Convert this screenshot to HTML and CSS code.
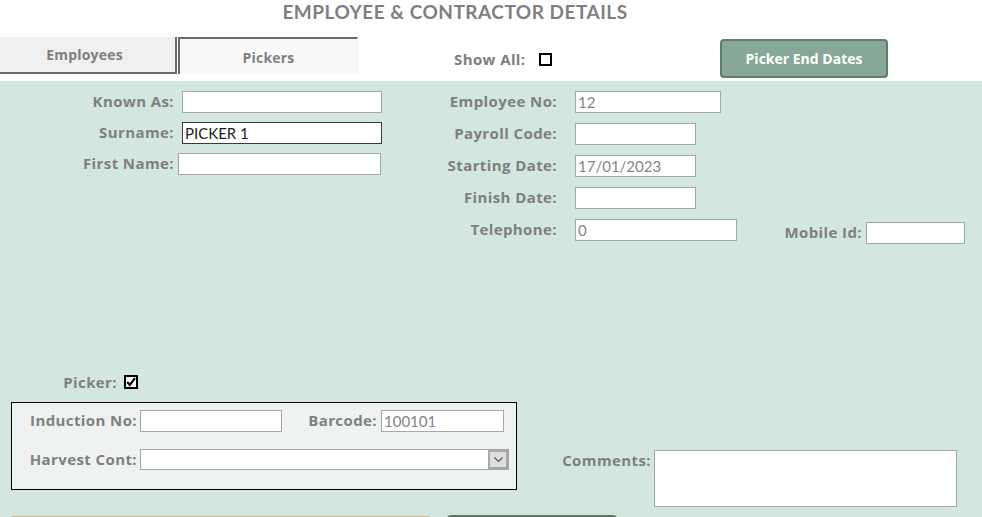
FILE: index.html
```html
<!DOCTYPE html>
<html lang="en">
<head>
  <meta name="viewport" content="width=device-width, initial-scale=1.0">
  <title>Employee &amp; Contractor Details</title>
  <link rel="stylesheet" href="styles.css">
</head>
<body>

  <div class="title">EMPLOYEE &amp; CONTRACTOR DETAILS</div>

  <div class="toolbar">
    <div class="tab tab-up">Employees</div>
    <div class="tab tab-down">Pickers</div>
    <div class="show-all">
      <span class="lbl">Show All:</span>
      <span class="check"></span>
    </div>
    <button class="green-btn">Picker End Dates</button>
  </div>

  <div class="panel">
    <div class="top">
      <div class="col-left">
        <div class="row">
          <span class="lbl w-left">Known As:</span>
          <div class="field w-200"></div>
        </div>
        <div class="row">
          <span class="lbl w-left">Surname:</span>
          <div class="field w-200 focused">PICKER 1</div>
        </div>
        <div class="row">
          <span class="lbl w-left">First Name:</span>
          <div class="field w-203 first-name"></div>
        </div>
      </div>

      <div class="col-right">
        <div class="row">
          <span class="lbl w-right">Employee No:</span>
          <div class="field w-146 dim">12</div>
        </div>
        <div class="row">
          <span class="lbl w-right">Payroll Code:</span>
          <div class="field w-121"></div>
        </div>
        <div class="row">
          <span class="lbl w-right">Starting Date:</span>
          <div class="field w-121 dim">17/01/2023</div>
        </div>
        <div class="row">
          <span class="lbl w-right">Finish Date:</span>
          <div class="field w-121"></div>
        </div>
        <div class="row">
          <span class="lbl w-right">Telephone:</span>
          <div class="field w-162 dim">0</div>
        </div>
      </div>

      <div class="col-mobile">
        <div class="row">
          <span class="lbl w-mobile">Mobile Id:</span>
          <div class="field w-99"></div>
        </div>
      </div>
    </div>

    <div class="bottom">
      <div class="picker-part">
        <div class="picker-row">
          <span class="lbl w-picker">Picker:</span>
          <span class="check checked">
            <svg width="10" height="10" viewBox="0 0 10 10"><path d="M1.2 5 L3.8 8 L9 1.2" fill="none" stroke="#000" stroke-width="2.2"/></svg>
          </span>
        </div>
        <div class="picker-box">
          <div class="row">
            <span class="lbl w-box">Induction No:</span>
            <div class="field w-142"></div>
            <span class="lbl w-barcode">Barcode:</span>
            <div class="field w-123 dim">100101</div>
          </div>
          <div class="row harvest-row">
            <span class="lbl w-box">Harvest Cont:</span>
            <div class="combo">
              <span class="combo-btn">
                <svg width="9" height="6" viewBox="0 0 9 6"><path d="M0.5 0.5 L4.5 4.5 L8.5 0.5" fill="none" stroke="#555" stroke-width="1.2"/></svg>
              </span>
            </div>
          </div>
        </div>
      </div>

      <div class="comments">
        <span class="lbl w-comments">Comments:</span>
        <div class="field memo"></div>
      </div>
    </div>

    <div class="actions">
      <div class="tan-bar"></div>
      <div class="dark-btn"></div>
    </div>
  </div>

</body>
</html>
```

FILE: styles.css
```css
body {
  margin: 0;
  font-family: Lato, "Open Sans", sans-serif;
  background: #fff;
  width: 982px;
  height: 517px;
  overflow: hidden;
}
.title {
  height: 25px;
  line-height: 24px;
  padding-right: 72px;
  text-align: center;
  font-size: 19px;
  font-weight: bold;
  letter-spacing: 0.5px;
  color: #7f7f7f;
}
.lbl {
  font-family: "Open Sans", sans-serif;
  font-size: 15px;
  font-weight: bold;
  letter-spacing: 0.4px;
  color: #7f7f7f;
  white-space: nowrap;
}
.toolbar {
  height: 56px;
  display: flex;
  align-items: flex-start;
}
.tab {
  box-sizing: border-box;
  height: 37px;
  margin-top: 12px;
  font-family: "Open Sans", sans-serif;
  font-size: 14px;
  font-weight: bold;
  letter-spacing: 0.2px;
  color: #7f7f7f;
  display: flex;
  align-items: center;
  justify-content: center;
}
.tab-up {
  width: 177px;
  padding-right: 6px;
  background: #f0f0f0;
  border-right: 2px solid #6b6b6b;
  border-bottom: 2px solid #6b6b6b;
}
.tab-down {
  width: 180px;
  margin-left: 1px;
  padding-top: 2px;
  background: #f9f9f9;
  border-left: 2px solid #6b6b6b;
  border-top: 2px solid #6b6b6b;
  border-right: 1px solid #f0f0f0;
}
.show-all {
  display: flex;
  align-items: center;
  gap: 13px;
  margin-left: 96px;
  margin-top: 24px;
  height: 20px;
}
.check {
  box-sizing: border-box;
  width: 13px;
  height: 13px;
  border: 2px solid #000;
  background: #fff;
  display: flex;
  align-items: center;
  justify-content: center;
}
.check svg {
  display: block;
}
.green-btn {
  box-sizing: border-box;
  width: 168px;
  height: 39px;
  margin-top: 14px;
  margin-left: auto;
  margin-right: 94px;
  background: #87a896;
  border: 2px solid #627c6d;
  border-radius: 4px;
  color: #fff;
  font-family: "Open Sans", sans-serif;
  font-size: 14px;
  font-weight: bold;
  padding: 0;
}

.panel {
  background: #d4e6e0;
  height: 436px;
  padding-top: 10px;
  box-sizing: border-box;
}
.top {
  display: flex;
  height: 152px;
}
.row {
  display: flex;
  align-items: center;
  height: 22px;
}
.row .lbl {
  margin-top: -2px;
}
.col-left .row {
  margin-bottom: 9px;
}
.col-right {
  margin-left: 27px;
}
.col-right .row {
  margin-bottom: 10px;
}
.col-mobile {
  margin-left: 45px;
  padding-top: 131px;
}
.w-left {
  width: 174px;
  text-align: right;
  margin-right: 8px;
}
.w-right {
  width: 148px;
  text-align: right;
  margin-right: 18px;
}
.w-mobile {
  width: 80px;
  text-align: right;
  margin-right: 4px;
}
.field {
  box-sizing: border-box;
  height: 22px;
  background: #fff;
  border: 1px solid #a6a6a6;
  font-size: 15px;
  line-height: 20px;
  padding-left: 2px;
  color: #222;
  overflow: hidden;
}
.field.dim {
  color: #858585;
}
.field.focused {
  border-color: #3a3a3a;
}
.first-name {
  margin-left: -4px;
}
.w-200 { width: 200px; }
.w-203 { width: 203px; }
.w-146 { width: 146px; }
.w-121 { width: 121px; }
.w-162 { width: 162px; }
.w-99 { width: 99px; }
.w-142 { width: 142px; }
.w-123 { width: 123px; }

.bottom {
  display: flex;
  margin-top: 129px;
}
.picker-part {
  margin-left: 11px;
}
.picker-row {
  display: flex;
  align-items: center;
  gap: 7px;
  height: 20px;
}
.w-picker {
  width: 106px;
  text-align: right;
}
.picker-row .check {
  width: 14px;
  height: 14px;
}
.picker-box {
  box-sizing: border-box;
  width: 506px;
  height: 88px;
  margin-top: 10px;
  border: 1px solid #000;
  background: #eef3f1;
  padding: 7px 0 0 15px;
}
.w-box {
  width: 110px;
  text-align: right;
  margin-right: 3px;
}
.w-barcode {
  width: 95px;
  text-align: right;
  margin-right: 4px;
}
.harvest-row {
  margin-top: 17px;
  height: 21px;
}
.combo {
  box-sizing: border-box;
  width: 369px;
  height: 21px;
  background: #fff;
  border: 1px solid #a6a6a6;
  display: flex;
  justify-content: flex-end;
}
.combo-btn {
  box-sizing: border-box;
  width: 20px;
  height: 19px;
  background: #dedede;
  border: 2px solid #a8a8a8;
  display: flex;
  align-items: center;
  justify-content: center;
}
.comments {
  display: flex;
  align-items: flex-start;
  margin-top: 78px;
  margin-left: 34px;
}
.w-comments {
  width: 100px;
  text-align: right;
  margin-right: 3px;
}
.memo {
  width: 303px;
  height: 57px;
}
.actions {
  display: flex;
  margin-top: 9px;
  margin-left: 11px;
}
.tan-bar {
  width: 419px;
  height: 4px;
  border-top: 1px solid #c5bc9c;
  background: #d4e6e0;
}
.dark-btn {
  width: 166px;
  height: 10px;
  margin-left: 17px;
  margin-top: -1px;
  background: #819c8c;
  border: 2px solid #5e7567;
  border-radius: 4px;
}
```
